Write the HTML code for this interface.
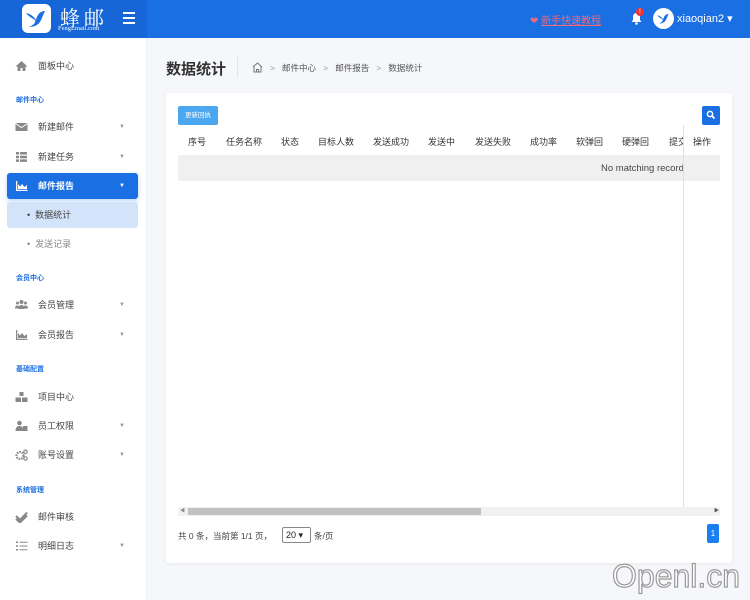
<!DOCTYPE html>
<html><head><meta charset="utf-8"><style>
*{margin:0;padding:0;box-sizing:border-box}
body{width:750px;height:600px;overflow:hidden;background:#f5f7fa;font-family:"Liberation Sans","Noto Sans CJK SC",sans-serif;position:relative;font-size:9px;color:#333}
.a{position:absolute;white-space:nowrap}
.hdr{left:0;top:0;width:750px;height:38px;background:#1a6fe3}
.side{left:0;top:38px;width:147px;height:562px;background:#fff;border-right:1px solid #eceef2}
.it{font-size:9px;color:#444;line-height:12px}
.ic{left:15px;width:13px;height:12px}
.sec{left:16px;font-size:7px;color:#1a6fe3;font-weight:bold}
.car{left:119px;font-size:6px;color:#999;line-height:12px}
.th{top:135px;font-size:9px;color:#333}
</style></head><body>
<div class="a hdr"></div>
<div class="a" style="left:0;top:0;width:147px;height:38px;background:#1766d8"></div>
<div class="a" style="left:22px;top:4px;width:29px;height:29px;background:#fff;border-radius:6px"></div>
<svg class="a" style="left:24px;top:7px" width="25" height="23" viewBox="0 0 25 23"><path d="M2 6 C7 7 10 10 12 13 C13 8 16 4 21 4 C19 8 18 11 17 13 C15 18 10 20 5 20 C10 18 12 15 11 13 C8 11 4 9 2 6Z" fill="#1a6fe3"/></svg>
<div class="a" style="left:60px;top:2px;color:#fff;font-size:20px;letter-spacing:4px;font-family:'Noto Serif CJK SC','Noto Sans CJK SC',serif">蜂邮</div>
<div class="a" style="left:58px;top:25px;color:#fff;font-size:6.5px;font-family:'Liberation Serif',serif">FengEmail.com</div>
<div class="a" style="left:123px;top:12px;width:12px;height:2px;background:#fff;box-shadow:0 5px 0 #fff,0 10px 0 #fff"></div>
<div class="a" style="left:530px;top:12px;color:#f06a7a;font-size:10px">&#10084;&#xFE0E; <span style="text-decoration:underline">新手快速教程</span></div>
<svg class="a" style="left:631px;top:12px" width="11" height="13" viewBox="0 0 11 13"><path d="M5.5 1C3 1 2 3 2 5v3L0.5 10h10L9 8V5C9 3 8 1 5.5 1Z" fill="#fff"/><circle cx="5.5" cy="11.5" r="1.3" fill="#fff"/></svg>
<div class="a" style="left:636px;top:8px;width:8px;height:8px;border-radius:4px;background:#e33;color:#fff;font-size:6px;text-align:center;line-height:8px">!</div>
<div class="a" style="left:653px;top:8px;width:21px;height:21px;border-radius:50%;background:#fff"></div>
<svg class="a" style="left:656px;top:11px" width="15" height="15" viewBox="0 0 25 23"><path d="M2 6 C7 7 10 10 12 13 C13 8 16 4 21 4 C19 8 18 11 17 13 C15 18 10 20 5 20 C10 18 12 15 11 13 C8 11 4 9 2 6Z" fill="#1a6fe3"/></svg>
<div class="a" style="left:677px;top:12px;color:#fff;font-size:11px">xiaoqian2 ▾</div>

<div class="a side"></div>
<svg class="a ic" style="top:60px" viewBox="0 0 13 12"><path d="M6.5 1L0.5 6.5h2V11h3V8h2v3h3V6.5h2Z" fill="#888"/></svg><div class="a it" style="left:38px;top:60px">面板中心</div>
<div class="a sec" style="top:95px">邮件中心</div>
<svg class="a ic" style="top:121px" viewBox="0 0 13 12"><rect x="0.5" y="2" width="12" height="8" fill="#888"/><path d="M0.5 2.5l6 4 6-4" stroke="#fff" fill="none"/></svg><div class="a it" style="left:38px;top:121px">新建邮件</div><div class="a car" style="top:121px">▼</div>
<svg class="a ic" style="top:151px" viewBox="0 0 13 12"><path d="M1 1h3v2.5H1zM5 1h7v2.5H5zM1 4.7h3v2.5H1zM5 4.7h7v2.5H5zM1 8.4h3v2.5H1zM5 8.4h7v2.5H5z" fill="#888"/></svg><div class="a it" style="left:38px;top:151px">新建任务</div><div class="a car" style="top:151px">▼</div>
<div class="a" style="left:7px;top:173px;width:131px;height:26px;background:#1a6fe3;border-radius:3px;box-shadow:0 2px 5px rgba(26,111,227,.3)"></div>
<svg class="a ic" style="top:180px" viewBox="0 0 13 12"><path d="M1 1v10h11.5v-1.3H2.3V1z M3 9h9V5l-2.5 2-2.5-3-2 2.5L3 4z" fill="#fff"/></svg><div class="a it" style="left:38px;top:180px;color:#fff;font-weight:bold">邮件报告</div><div class="a car" style="top:180px;color:#fff">▼</div>
<div class="a" style="left:7px;top:202px;width:131px;height:26px;background:#d3e3fa;border-radius:3px"></div>
<div class="a it" style="left:27px;top:209px">•&nbsp; 数据统计</div>
<div class="a it" style="left:27px;top:238px;color:#888">•&nbsp; 发送记录</div>
<div class="a sec" style="top:273px">会员中心</div>
<svg class="a ic" style="top:299px" viewBox="0 0 13 12"><circle cx="6.5" cy="3" r="2" fill="#888"/><circle cx="2.5" cy="4" r="1.5" fill="#888"/><circle cx="10.5" cy="4" r="1.5" fill="#888"/><path d="M3.5 10c0-3 1.5-4 3-4s3 1 3 4zM0 9.5c0-2 1-3 2.5-3s2 1 2 3zM8.5 9.5c0-2 .5-3 2-3s2.5 1 2.5 3z" fill="#888"/></svg><div class="a it" style="left:38px;top:299px">会员管理</div><div class="a car" style="top:299px">▼</div>
<svg class="a ic" style="top:329px" viewBox="0 0 13 12"><path d="M1 1v10h11.5v-1.3H2.3V1z M3 9h9V5l-2.5 2-2.5-3-2 2.5L3 4z" fill="#888"/></svg><div class="a it" style="left:38px;top:329px">会员报告</div><div class="a car" style="top:329px">▼</div>
<div class="a sec" style="top:364px">基础配置</div>
<svg class="a ic" style="top:391px" viewBox="0 0 13 12"><path d="M4.5 1h4v4h-4zM0.5 6.5h5.5v4.5H0.5zM7 6.5h5.5v4.5H7z" fill="#888"/></svg><div class="a it" style="left:38px;top:391px">项目中心</div>
<svg class="a ic" style="top:420px" viewBox="0 0 13 12"><circle cx="4.5" cy="3" r="2.3" fill="#888"/><path d="M0.5 11c0-4 2-5 4-5s4 1 4 5z" fill="#888"/><rect x="8" y="6" width="4.5" height="5" fill="#888"/></svg><div class="a it" style="left:38px;top:420px">员工权限</div><div class="a car" style="top:420px">▼</div>
<svg class="a ic" style="top:449px" viewBox="0 0 13 12"><circle cx="5" cy="6.5" r="3.5" fill="none" stroke="#888" stroke-width="2.2" stroke-dasharray="1.6 1"/><circle cx="10.5" cy="2.8" r="1.7" fill="none" stroke="#888" stroke-width="1.2"/><circle cx="10.5" cy="9.5" r="1.7" fill="none" stroke="#888" stroke-width="1.2"/></svg><div class="a it" style="left:38px;top:449px">账号设置</div><div class="a car" style="top:449px">▼</div>
<div class="a sec" style="top:485px">系统管理</div>
<svg class="a ic" style="top:511px" viewBox="0 0 13 12"><path d="M1 5l4 4 7-7.5M1 8l4 3.5 7-7" stroke="#888" stroke-width="2" fill="none"/></svg><div class="a it" style="left:38px;top:511px">邮件审核</div>
<svg class="a ic" style="top:540px" viewBox="0 0 13 12"><path d="M1 1.5h2v1.5H1zM4.5 1.7h8v1H4.5zM1 5.2h2v1.5H1zM4.5 5.5h8v1H4.5zM1 9h2v1.5H1zM4.5 9.3h8v1H4.5z" fill="#888"/></svg><div class="a it" style="left:38px;top:540px">明细日志</div><div class="a car" style="top:540px">▼</div>

<div class="a" style="left:166px;top:58px;font-size:15px;font-weight:bold;color:#333">数据统计</div>
<div class="a" style="left:237px;top:56px;width:1px;height:22px;background:#e3e5e8"></div>
<svg class="a" style="left:252px;top:62px" width="11" height="11" viewBox="0 0 11 11"><path d="M1 5L5.5 1 10 5M2 4.5V10h7V4.5M4.5 10V7.5h2V10" stroke="#777" fill="none"/></svg>
<div class="a" style="left:270px;top:62px;font-size:8.5px;color:#555"><span style="color:#999">&gt;</span>&nbsp;&nbsp;&nbsp;邮件中心&nbsp;&nbsp;&nbsp;<span style="color:#999">&gt;</span>&nbsp;&nbsp;&nbsp;邮件报告&nbsp;&nbsp;&nbsp;<span style="color:#999">&gt;</span>&nbsp;&nbsp;&nbsp;数据统计</div>

<div class="a" style="left:166px;top:93px;width:566px;height:470px;background:#fff;border-radius:3px;box-shadow:0 1px 4px rgba(0,0,0,.06)"></div>
<div class="a" style="left:178px;top:106px;width:40px;height:19px;background:#4ba8f0;border-radius:2px;color:#fff;font-size:6.5px;line-height:19px;text-align:center">更新回执</div>
<div class="a" style="left:702px;top:106px;width:18px;height:19px;background:#1a6fe3;border-radius:2px"></div>
<svg class="a" style="left:706px;top:110px" width="10" height="10" viewBox="0 0 10 10"><circle cx="4" cy="4" r="2.6" stroke="#fff" stroke-width="1.5" fill="none"/><path d="M6 6l2.5 2.5" stroke="#fff" stroke-width="1.8"/></svg>
<div class="a th" style="left:188px">序号</div><div class="a th" style="left:226px">任务名称</div><div class="a th" style="left:281px">状态</div><div class="a th" style="left:318px">目标人数</div><div class="a th" style="left:373px">发送成功</div><div class="a th" style="left:428px">发送中</div><div class="a th" style="left:475px">发送失败</div><div class="a th" style="left:530px">成功率</div><div class="a th" style="left:576px">软弹回</div><div class="a th" style="left:622px">硬弹回</div><div class="a th" style="left:669px;width:14px;overflow:hidden">提交</div><div class="a th" style="left:693px">操作</div>
<div class="a" style="left:178px;top:155px;width:542px;height:26px;background:#f0f0f0"></div>
<div class="a" style="left:601px;top:163px;font-size:9.5px;color:#444;width:82px;overflow:hidden">No matching records</div>
<div class="a" style="left:683px;top:125px;width:1px;height:390px;background:#e0e0e0"></div>
<div class="a" style="left:178px;top:507px;width:542px;height:9px;background:#f1f1f1"></div>
<div class="a" style="left:188px;top:508px;width:293px;height:7px;background:#c1c1c1"></div>
<div class="a" style="left:180px;top:507px;font-size:5px;color:#888">◀</div><div class="a" style="left:714px;top:507px;font-size:5px;color:#555">▶</div>
<div class="a" style="left:178px;top:530px;font-size:8.5px;color:#444">共 0 条，当前第 1/1 页，</div>
<div class="a" style="left:282px;top:527px;width:29px;height:16px;border:1px solid #888;border-radius:2px;font-size:9px;line-height:14px;padding-left:3px;color:#222">20 ▾</div>
<div class="a" style="left:314px;top:530px;font-size:8.5px;color:#444">条/页</div>
<div class="a" style="left:707px;top:524px;width:12px;height:19px;background:#1a7ff0;border-radius:2px;color:#fff;font-size:8px;line-height:19px;text-align:center">1</div>
<div class="a" style="left:612px;top:558px;font-size:32px;color:#fff;-webkit-text-stroke:1.2px #999;font-family:'Liberation Sans',sans-serif">Openl.cn</div>
</body></html>
